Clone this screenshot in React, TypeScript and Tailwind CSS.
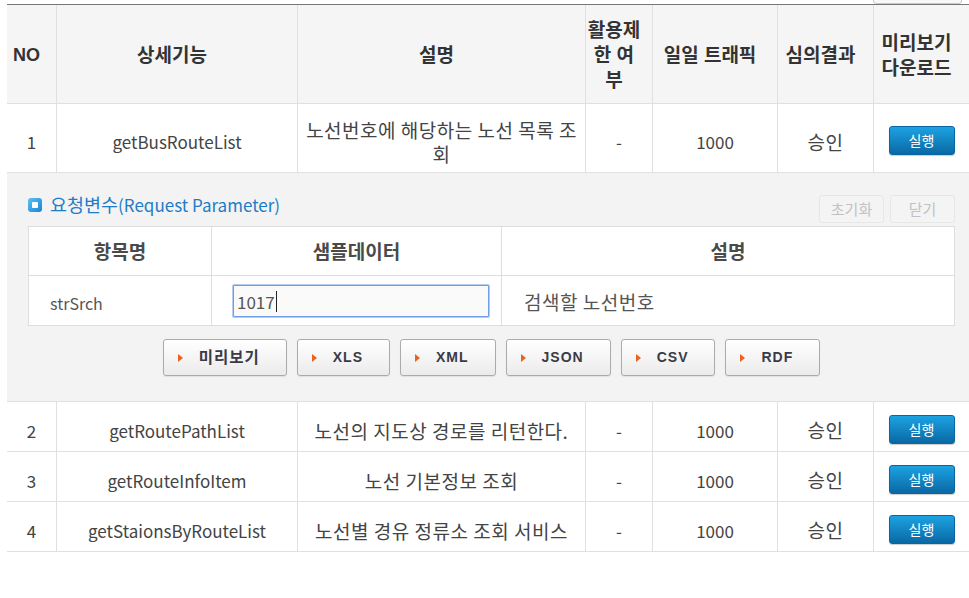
import React from "react";

const FONT = { fontFamily: '"Noto Sans CJK KR", "Noto Sans", sans-serif' };
const HFONT = { fontFamily: '"Liberation Sans", "Noto Sans CJK KR", sans-serif' };

const GRID = "grid grid-cols-[49px_241px_288px_67px_125px_96px_96px]";

function K({ children }: { children: React.ReactNode }) {
  return <span className="text-[19px] tracking-[0.5px] whitespace-nowrap">{children}</span>;
}

function RunButton() {
  return (
    <div className="w-[66px] h-[29px] rounded-[3px] bg-gradient-to-b from-[#1da2e2] to-[#0a69a5] border border-[#0b65a0] flex items-center justify-center text-white text-[14px] shadow-[0_1px_1px_rgba(0,0,0,0.2)]">
      실행
    </div>
  );
}

function BodyRow({
  no,
  fn,
  desc,
  tall,
}: {
  no: string;
  fn: string;
  desc: React.ReactNode;
  tall?: boolean;
}) {
  const cell =
    "flex items-center justify-center text-center border-l border-[#e0e0e0] pt-[8px]";
  return (
    <div
      className={`${GRID} ${tall ? "h-[69px]" : "h-[50px]"} border-b border-[#e0e0e0] text-[17px] text-[#444]`}
    >
      <div className="flex items-center justify-center pt-[8px]">{no}</div>
      <div className={cell}>{fn}</div>
      <div className={`${cell} px-[4px] leading-[24px]`}>{desc}</div>
      <div className={cell}>-</div>
      <div className={cell}>1000</div>
      <div className={cell}>
        <K>승인</K>
      </div>
      <div className="flex items-center justify-center border-l border-[#e0e0e0] pt-[5px]">
        <RunButton />
      </div>
    </div>
  );
}

function OutButton({ label, kor }: { label: string; kor?: boolean }) {
  return (
    <div className="h-[37px] flex items-center pl-[14px] pr-[26px] gap-[16px] rounded-[3px] border border-[#ababab] bg-gradient-to-b from-white to-[#ebebeb] shadow-[0_1px_1px_rgba(0,0,0,0.08)]">
      <div className="w-0 h-0 border-y-[4.5px] border-y-transparent border-l-[5px] border-l-[#e8641c]" />
      <span
        className={`${kor ? "text-[15.5px]" : "text-[14px]"} font-bold tracking-[1px] text-[#3a3a48]`}
        style={HFONT}
      >
        {label}
      </span>
    </div>
  );
}

export default function App() {
  const hcell =
    "flex items-center justify-center text-center border-l border-[#e0e0e0] pr-[10px] pt-[3px] whitespace-nowrap";
  return (
    <div className="w-[969px] h-[598px] bg-white overflow-hidden" style={FONT}>
      <div className="ml-[7px] w-[962px]">
        {/* partial button above table */}
        <div className="h-[4px] overflow-hidden flex justify-end items-end pr-[7px]">
          <div className="shrink-0 w-[89px] h-[30px] border border-[#c8c8c8] rounded-[3px] bg-[#f8f8f8]" />
        </div>

        {/* header */}
        <div
          className={`${GRID} h-[100px] border-t border-[#777] border-b border-b-[#e0e0e0] bg-[#f5f5f5] text-[19px] font-bold text-[#333] leading-[25px]`}
          style={HFONT}
        >
          <div className="flex items-center justify-center pr-[10px] pt-[3px] text-[18px]">NO</div>
          <div className={hcell}>상세기능</div>
          <div className={hcell}>설명</div>
          <div className={hcell}>
            활용제
            <br />
            한 여
            <br />부
          </div>
          <div className={hcell}>일일 트래픽</div>
          <div className={hcell}>심의결과</div>
          <div className={hcell}>
            미리보기
            <br />
            다운로드
          </div>
        </div>

        <BodyRow
          no="1"
          fn="getBusRouteList"
          desc={
            <K>
              노선번호에 해당하는 노선 목록 조<br />회
            </K>
          }
          tall
        />

        {/* request parameter panel */}
        <div className="h-[229px] bg-[#f3f3f3] border-b border-[#e0e0e0] pt-[20px] pl-[21px] pr-[14px]">
          <div className="flex items-start justify-between">
            <div className="flex items-center gap-[8px] leading-[22px] text-[17px] text-[#1f7cc6]">
              <div className="w-[14px] h-[14px] rounded-[3px] bg-gradient-to-br from-[#5cc0f5] to-[#1683d4] flex items-center justify-center">
                <div className="w-[6px] h-[6px] bg-white rounded-[1px]" />
              </div>
              <span>
                <span className="text-[18.5px]">요청변수</span>(Request Parameter)
              </span>
            </div>
            <div className="flex gap-[6px] mt-[2px]">
              <div className="w-[65px] h-[28px] rounded-[3px] border border-[#e7e7e7] bg-[#f4f4f4] flex items-center justify-center text-[15px] text-[#c2c2c2]">
                초기화
              </div>
              <div className="w-[65px] h-[28px] rounded-[3px] border border-[#e7e7e7] bg-[#f4f4f4] flex items-center justify-center text-[15px] text-[#c2c2c2]">
                닫기
              </div>
            </div>
          </div>

          <div className="mt-[3px] bg-white border border-[#dedede]">
            <div className="grid grid-cols-[182px_290px_1fr] h-[49px] border-b border-[#dedede] text-[19px] font-bold text-[#4a4a4a]">
              <div className="flex items-center justify-center">항목명</div>
              <div className="flex items-center justify-center border-l border-[#dedede]">
                샘플데이터
              </div>
              <div className="flex items-center justify-center border-l border-[#dedede]">
                설명
              </div>
            </div>
            <div className="grid grid-cols-[182px_290px_1fr] h-[49px] text-[16px] text-[#555]">
              <div className="flex items-center pl-[21px] pt-[4px]">strSrch</div>
              <div className="flex items-center border-l border-[#dedede] pl-[21px]">
                <div className="w-[256px] h-[32px] border border-[#6d9de6] shadow-[0_0_0_1px_#b4cdf2] rounded-[1px] bg-[#fafafa] flex items-center pl-[3px] pt-[2px] text-[17px]">
                  <span>1017</span>
                  <span className="inline-block w-[1px] h-[21px] bg-[#222] ml-[1px]" />
                </div>
              </div>
              <div className="flex items-center border-l border-[#dedede] pl-[22px] pt-[4px]">
                <K>검색할 노선번호</K>
              </div>
            </div>
          </div>

          <div className="mt-[13px] flex justify-center gap-[10px]">
            <OutButton label="미리보기" kor />
            <OutButton label="XLS" />
            <OutButton label="XML" />
            <OutButton label="JSON" />
            <OutButton label="CSV" />
            <OutButton label="RDF" />
          </div>
        </div>

        <BodyRow no="2" fn="getRoutePathList" desc={<K>노선의 지도상 경로를 리턴한다.</K>} />
        <BodyRow no="3" fn="getRouteInfoItem" desc={<K>노선 기본정보 조회</K>} />
        <BodyRow no="4" fn="getStaionsByRouteList" desc={<K>노선별 경유 정류소 조회 서비스</K>} />
      </div>
    </div>
  );
}
